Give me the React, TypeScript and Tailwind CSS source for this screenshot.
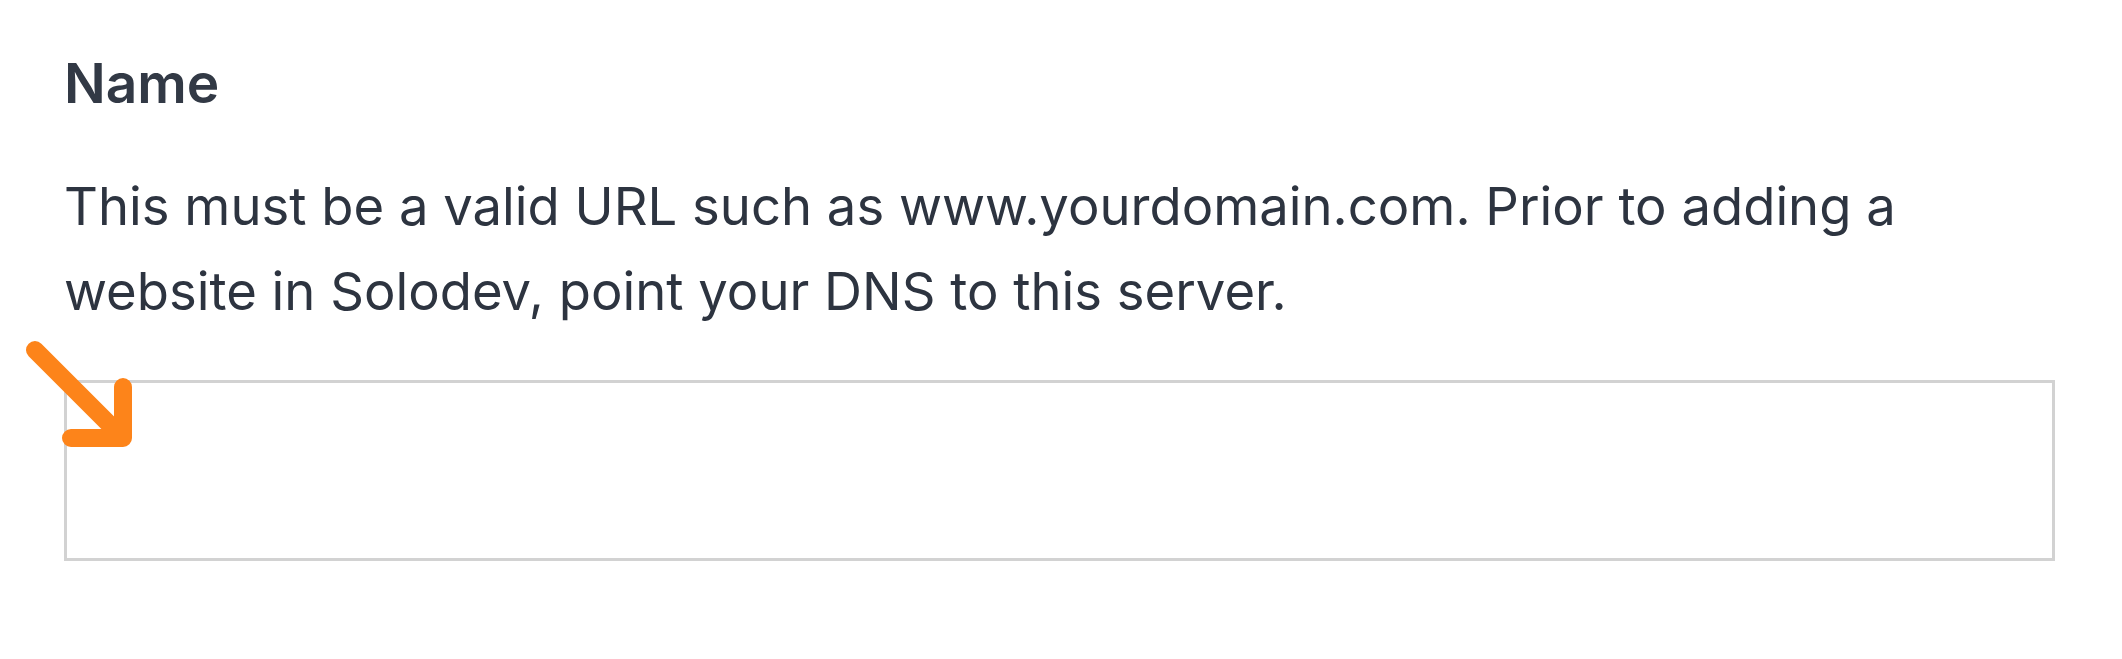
import React from "react";

export default function App() {
  return (
    <div
      className="relative w-[2122px] h-[659px] bg-white"
      style={{ fontFamily: "Inter, 'Noto Sans', sans-serif" }}
    >
      <div className="pl-[64px] pr-[67px] pt-[41px]">
        <div className="text-[55px] leading-[84px] font-semibold text-[#323945]">Name</div>
        <p className="mt-[39px] text-[52.6px] leading-[85px] text-[#2d3440]">
          This must be a valid URL such as www.yourdomain.com. Prior to adding a
          <br />
          website in Solodev, point your DNS to this server.
        </p>
        <div className="mt-[46px] h-[181px] border-[3px] border-[#d2d2d2] bg-white" />
      </div>
      <svg
        className="absolute left-0 top-0"
        width="200"
        height="500"
        viewBox="0 0 200 500"
        fill="none"
      >
        <path
          d="M35 350 L121 436 M123 387 L123 438 L71 438"
          stroke="#fd841a"
          strokeWidth="18"
          strokeLinecap="round"
          strokeLinejoin="round"
        />
      </svg>
    </div>
  );
}
